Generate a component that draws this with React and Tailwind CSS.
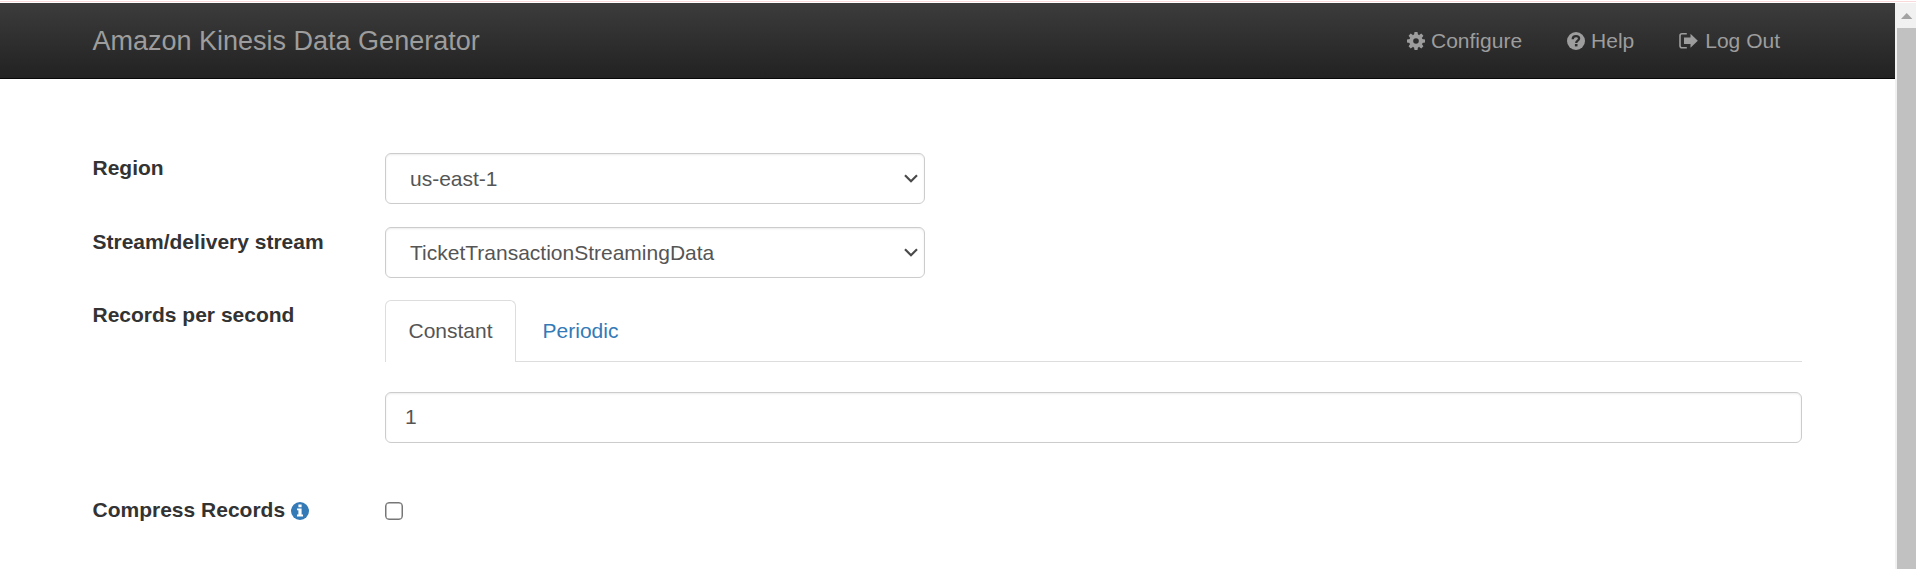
function Gear() {
  return (
    <svg viewBox="0 0 18 18" className="h-[18px] w-[18px] fill-current">
      <mask id="hub" maskUnits="userSpaceOnUse" x="0" y="0" width="18" height="18">
        <rect width="18" height="18" fill="white" />
        <circle cx="9" cy="9" r="2.8" fill="black" />
      </mask>
      <g mask="url(#hub)">
        <circle cx="9" cy="9" r="6.8" />
        <path d="M7.5 0H10.5L11 3H7ZM7.5 18H10.5L11 15H7ZM0 7.5V10.5L3 11V7ZM18 7.5V10.5L15 11V7Z" />
        <path d="M7.5 0H10.5L11 3H7ZM7.5 18H10.5L11 15H7ZM0 7.5V10.5L3 11V7ZM18 7.5V10.5L15 11V7Z" transform="rotate(45 9 9)" />
      </g>
    </svg>
  );
}

function Question() {
  return (
    <svg viewBox="0 0 18 18" className="h-[18px] w-[18px]">
      <circle cx="9" cy="9" r="9" className="fill-current" />
      <path d="M5.7 7.2C5.7 5 7.1 4.1 9 4.1C11 4.1 12.1 5.1 12.1 6.6C12.1 8.7 9.2 8.5 9.2 10.9" fill="none" stroke="#2d2d2d" strokeWidth="2.3" />
      <rect x="7.9" y="12" width="2.6" height="2.4" fill="#2d2d2d" />
    </svg>
  );
}

function LogOut() {
  return (
    <svg viewBox="0 0 20 18" className="h-[18px] w-5">
      <path d="M7.8 1.8H3Q1 1.8 1 3.8V13.8Q1 15.8 3 15.8H7.8" fill="none" stroke="currentColor" strokeWidth="1.6" />
      <path d="M11.5 1.8L18.8 8.8L11.5 15.8V12H5V5.6H11.5Z" className="fill-current" />
    </svg>
  );
}

function Info() {
  return (
    <svg viewBox="0 0 18 18" className="relative top-px h-[18px] w-[18px]">
      <circle cx="9" cy="9" r="9" fill="#337ab7" />
      <path d="M7.4 2.5H10.6V5.2H7.4ZM6 6.6H10.6V12.6H12V14.4H6V12.6H7.4V8.3H6Z" fill="white" />
    </svg>
  );
}

function Select({ value }) {
  return (
    <div className="flex h-[51px] w-[540px] items-center justify-between rounded-[6px] border border-[#ccc] pr-[6px] pl-[24px] text-[#555] shadow-[inset_0_1px_2px_rgba(0,0,0,0.075)]">
      <span>{value}</span>
      <svg viewBox="0 0 14 9" className="h-[9px] w-[14px]">
        <path d="M1 1.2L7 7.2L13 1.2" fill="none" stroke="#4a4a4a" strokeWidth="2.2" />
      </svg>
    </div>
  );
}

function Row({ label, className, children }) {
  return (
    <div className={`flex ${className}`}>
      <div className="w-[292.5px] shrink-0 font-bold leading-[30px]">{label}</div>
      {children}
    </div>
  );
}

export default function App() {
  return (
    <div className="flex h-[569px] flex-col overflow-hidden bg-white font-['Liberation_Sans',Arial,sans-serif] text-[21px] leading-[30px] text-[#333]">
      <div className="h-[3px] shrink-0 py-px">
        <div className="h-px bg-[#f9d9d9]" />
      </div>
      <div className="flex flex-1">
        <div className="flex-1">
          <header className="flex h-[76px] items-center justify-between border-b border-[#080808] bg-linear-to-b from-[#3c3c3c] to-[#222] pr-[115px] pl-[92.5px] text-[#9d9d9d]">
            <div className="text-[27px]">Amazon Kinesis Data Generator</div>
            <nav className="flex gap-[45px]">
              <div className="flex items-center gap-[6px]"><Gear />Configure</div>
              <div className="flex items-center gap-[6px]"><Question />Help</div>
              <div className="flex items-center gap-[6px]"><LogOut />Log Out</div>
            </nav>
          </header>
          <main className="pt-[74px] pl-[92.5px]">
            <Row label="Region" className="h-[74px]"><Select value="us-east-1" /></Row>
            <Row label="Stream/delivery stream" className="h-[73px]"><Select value="TicketTransactionStreamingData" /></Row>
            <Row label="Records per second" className="h-[195px]">
              <div className="w-[1417px]">
                <div className="flex h-[62px] border-b border-[#ddd]">
                  <div className="flex h-[62px] w-[131px] items-center justify-center rounded-t-[6px] border border-b-0 border-[#ddd] bg-white pb-[2px] text-[#555]">Constant</div>
                  <div className="flex w-[129px] items-center justify-center text-[#337ab7]">Periodic</div>
                </div>
                <div className="mt-[30px] flex h-[51px] items-center rounded-[6px] border border-[#ccc] pb-px pl-[19px] text-[#555] shadow-[inset_0_1px_2px_rgba(0,0,0,0.075)]">1</div>
              </div>
            </Row>
            <Row label={<span className="flex items-center gap-[6px]">Compress Records <Info /></span>} className="">
              <div className="mt-[7px] h-[18px] w-[18px] rounded-[4px] border border-[#767676] bg-white shadow-[inset_0_0_0_0.5px_#767676]" />
            </Row>
          </main>
        </div>
        <div className="flex w-[21px] flex-col items-center bg-[#f1f1f1] pl-[2px]">
          <svg viewBox="0 0 19 25" className="h-[25px] w-[19px]">
            <path d="M4 16L9.7 10L15.4 16Z" fill="#a3a3a3" />
          </svg>
          <div className="w-full flex-1 bg-[#c1c1c1]" />
        </div>
      </div>
    </div>
  );
}
